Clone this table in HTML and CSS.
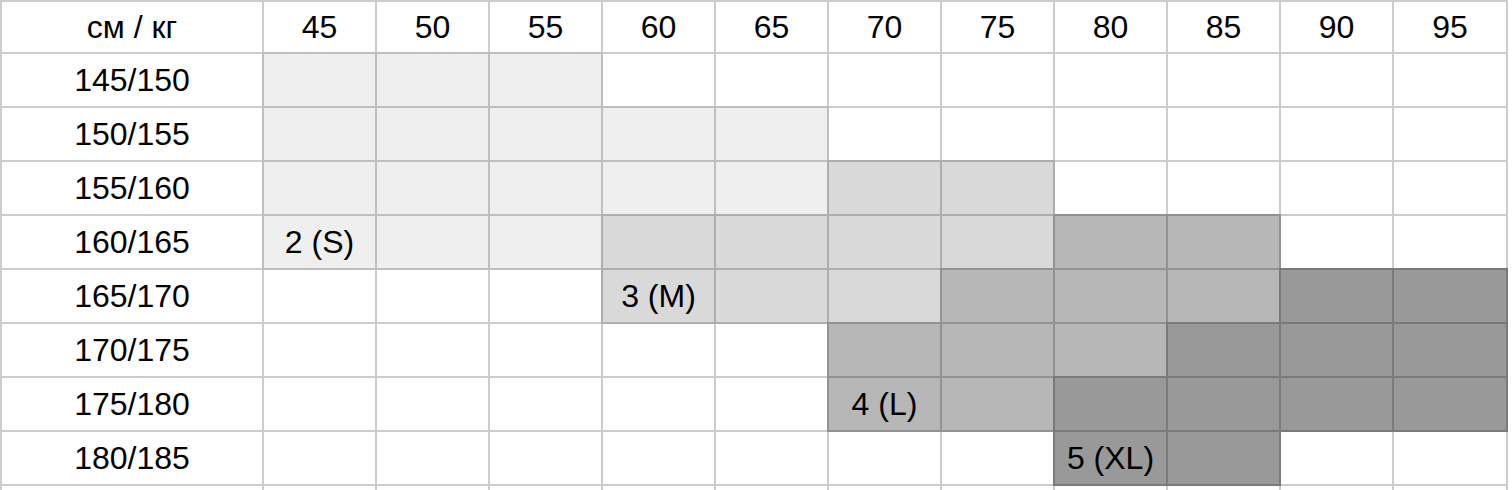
FILE: index.html
```html
<!DOCTYPE html>
<html lang="ru">
<head>
    <meta charset="UTF-8">
    <meta name="viewport" content="width=device-width, initial-scale=1.0">
    <title>Размерная сетка</title>
    <link rel="stylesheet" href="styles.css">
</head>
<body>
    <div class="size-grid">
        <!-- header -->
        <div class="cell">см / кг</div>
        <div class="cell">45</div>
        <div class="cell">50</div>
        <div class="cell">55</div>
        <div class="cell">60</div>
        <div class="cell">65</div>
        <div class="cell">70</div>
        <div class="cell">75</div>
        <div class="cell">80</div>
        <div class="cell">85</div>
        <div class="cell">90</div>
        <div class="cell">95</div>

        <!-- 145/150 -->
        <div class="cell">145/150</div>
        <div class="cell s1"></div>
        <div class="cell s1"></div>
        <div class="cell s1"></div>
        <div class="cell"></div>
        <div class="cell"></div>
        <div class="cell"></div>
        <div class="cell"></div>
        <div class="cell"></div>
        <div class="cell"></div>
        <div class="cell"></div>
        <div class="cell"></div>

        <!-- 150/155 -->
        <div class="cell">150/155</div>
        <div class="cell s1"></div>
        <div class="cell s1"></div>
        <div class="cell s1"></div>
        <div class="cell s1"></div>
        <div class="cell s1"></div>
        <div class="cell"></div>
        <div class="cell"></div>
        <div class="cell"></div>
        <div class="cell"></div>
        <div class="cell"></div>
        <div class="cell"></div>

        <!-- 155/160 -->
        <div class="cell">155/160</div>
        <div class="cell s1"></div>
        <div class="cell s1"></div>
        <div class="cell s1"></div>
        <div class="cell s1"></div>
        <div class="cell s1"></div>
        <div class="cell s2"></div>
        <div class="cell s2"></div>
        <div class="cell"></div>
        <div class="cell"></div>
        <div class="cell"></div>
        <div class="cell"></div>

        <!-- 160/165 -->
        <div class="cell">160/165</div>
        <div class="cell s1">2 (S)</div>
        <div class="cell s1"></div>
        <div class="cell s1"></div>
        <div class="cell s2"></div>
        <div class="cell s2"></div>
        <div class="cell s2"></div>
        <div class="cell s2"></div>
        <div class="cell s3"></div>
        <div class="cell s3"></div>
        <div class="cell"></div>
        <div class="cell"></div>

        <!-- 165/170 -->
        <div class="cell">165/170</div>
        <div class="cell"></div>
        <div class="cell"></div>
        <div class="cell"></div>
        <div class="cell s2">3 (M)</div>
        <div class="cell s2"></div>
        <div class="cell s2"></div>
        <div class="cell s3"></div>
        <div class="cell s3"></div>
        <div class="cell s3"></div>
        <div class="cell s4"></div>
        <div class="cell s4"></div>

        <!-- 170/175 -->
        <div class="cell">170/175</div>
        <div class="cell"></div>
        <div class="cell"></div>
        <div class="cell"></div>
        <div class="cell"></div>
        <div class="cell"></div>
        <div class="cell s3"></div>
        <div class="cell s3"></div>
        <div class="cell s3"></div>
        <div class="cell s4"></div>
        <div class="cell s4"></div>
        <div class="cell s4"></div>

        <!-- 175/180 -->
        <div class="cell">175/180</div>
        <div class="cell"></div>
        <div class="cell"></div>
        <div class="cell"></div>
        <div class="cell"></div>
        <div class="cell"></div>
        <div class="cell s3">4 (L)</div>
        <div class="cell s3"></div>
        <div class="cell s4"></div>
        <div class="cell s4"></div>
        <div class="cell s4"></div>
        <div class="cell s4"></div>

        <!-- 180/185 -->
        <div class="cell">180/185</div>
        <div class="cell"></div>
        <div class="cell"></div>
        <div class="cell"></div>
        <div class="cell"></div>
        <div class="cell"></div>
        <div class="cell"></div>
        <div class="cell"></div>
        <div class="cell s4">5 (XL)</div>
        <div class="cell s4"></div>
        <div class="cell"></div>
        <div class="cell"></div>

        <!-- next row, cut off by the window -->
        <div class="cell"></div>
        <div class="cell"></div>
        <div class="cell"></div>
        <div class="cell"></div>
        <div class="cell"></div>
        <div class="cell"></div>
        <div class="cell"></div>
        <div class="cell"></div>
        <div class="cell"></div>
        <div class="cell"></div>
        <div class="cell"></div>
        <div class="cell"></div>
    </div>
</body>
</html>
```

FILE: styles.css
```css
* {
    box-sizing: border-box;
    margin: 0;
    padding: 0;
}

body {
    background: #fff;
    font-family: "Liberation Sans", Arial, sans-serif;
    color: #000;
}

.size-grid {
    display: grid;
    grid-template-columns: 262px repeat(10, 113px) 114px;
    grid-template-rows: 52px repeat(10, 54px);
    padding: 1px 0 0 1px;
}

/* darker fills sit higher so their grid lines win */
.cell {
    position: relative;
    z-index: 1;
    display: flex;
    align-items: center;
    justify-content: center;
    font-size: 32px;
    background: #fff;
    outline: 2px solid #cccccc;
    outline-offset: -1px;
    white-space: nowrap;
}

.s1 {
    z-index: 2;
    background: #efefef;
    outline-color: #bfbfbf;
}

.s2 {
    z-index: 3;
    background: #d9d9d9;
    outline-color: #aeaeae;
}

.s3 {
    z-index: 4;
    background: #b7b7b7;
    outline-color: #929292;
}

.s4 {
    z-index: 5;
    background: #999999;
    outline-color: #7a7a7a;
}
```
